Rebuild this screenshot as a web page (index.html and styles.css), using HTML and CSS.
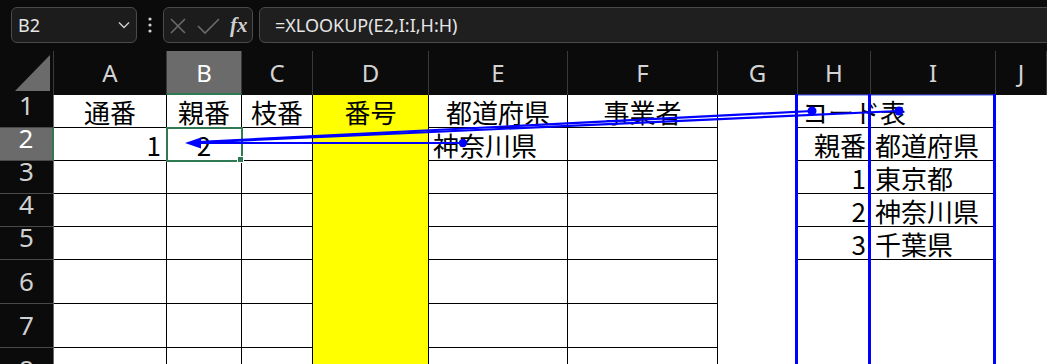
FILE: index.html
```html
<!DOCTYPE html>
<html lang="ja">
<head>
  <meta charset="UTF-8" />
  <title>XLOOKUP - コード表</title>
  <link rel="stylesheet" href="styles.css">
</head>
<body>
  <div class="topbar">
    <div class="namebox">
      <span>B2</span>
      <svg width="12" height="8" viewBox="0 0 12 8"><polyline points="1,1.5 6,6.5 11,1.5" fill="none" stroke="#cfcfcf" stroke-width="1.4"/></svg>
    </div>
    <div class="dots">
      <svg width="4" height="16" viewBox="0 0 4 16"><circle cx="2" cy="2" r="1.6" fill="#cfcfcf"/><circle cx="2" cy="8" r="1.6" fill="#cfcfcf"/><circle cx="2" cy="14" r="1.6" fill="#cfcfcf"/></svg>
    </div>
    <div class="fxbox">
      <svg width="56" height="34" viewBox="0 0 56 34">
        <path d="M2 11 L16 25 M16 11 L2 25" stroke="#6a6a6a" stroke-width="1.6" fill="none"/>
        <polyline points="29,18 36,25 50,11" stroke="#6a6a6a" stroke-width="1.6" fill="none"/>
      </svg>
      <span class="fx">fx</span>
    </div>
    <div class="formula">=XLOOKUP(E2,I:I,H:H)</div>
  </div>

  <div class="sheet">
    <!-- 列見出し -->
    <div class="corner"><svg width="54" height="44"><polygon points="15,40 50,4 50,40" fill="#6b6b6b"/></svg></div>
    <div class="ch">A</div>
    <div class="ch on">B</div>
    <div class="ch">C</div>
    <div class="ch">D</div>
    <div class="ch">E</div>
    <div class="ch">F</div>
    <div class="ch">G</div>
    <div class="ch">H</div>
    <div class="ch">I</div>
    <div class="ch">J</div>

    <!-- 1 -->
    <div class="rn">1</div>
    <div class="cell g ctr">通番</div>
    <div class="cell g ctr">親番</div>
    <div class="cell g ctr">枝番</div>
    <div class="cell yel ctr">番号</div>
    <div class="cell g ctr">都道府県</div>
    <div class="cell g ctr">事業者</div>
    <div class="cell"></div>
    <div class="cell gb">コード表</div>
    <div class="cell gb"></div>
    <div class="cell"></div>

    <!-- 2 -->
    <div class="rn on">2</div>
    <div class="cell g rt">1</div>
    <div class="cell g ctr sel">2</div>
    <div class="cell g"></div>
    <div class="cell yel"></div>
    <div class="cell g">神奈川県</div>
    <div class="cell g"></div>
    <div class="cell"></div>
    <div class="cell gb rt">親番</div>
    <div class="cell gb">都道府県</div>
    <div class="cell"></div>

    <!-- 3 -->
    <div class="rn">3</div>
    <div class="cell g"></div>
    <div class="cell g"></div>
    <div class="cell g"></div>
    <div class="cell yel"></div>
    <div class="cell g"></div>
    <div class="cell g"></div>
    <div class="cell"></div>
    <div class="cell gb rt">1</div>
    <div class="cell gb">東京都</div>
    <div class="cell"></div>

    <!-- 4 -->
    <div class="rn">4</div>
    <div class="cell g"></div>
    <div class="cell g"></div>
    <div class="cell g"></div>
    <div class="cell yel"></div>
    <div class="cell g"></div>
    <div class="cell g"></div>
    <div class="cell"></div>
    <div class="cell gb rt">2</div>
    <div class="cell gb">神奈川県</div>
    <div class="cell"></div>

    <!-- 5 -->
    <div class="rn">5</div>
    <div class="cell g"></div>
    <div class="cell g"></div>
    <div class="cell g"></div>
    <div class="cell yel"></div>
    <div class="cell g"></div>
    <div class="cell g"></div>
    <div class="cell"></div>
    <div class="cell gb rt">3</div>
    <div class="cell gb">千葉県</div>
    <div class="cell"></div>

    <!-- 6 -->
    <div class="rn">6</div>
    <div class="cell g"></div>
    <div class="cell g"></div>
    <div class="cell g"></div>
    <div class="cell yel"></div>
    <div class="cell g"></div>
    <div class="cell g"></div>
    <div class="cell"></div>
    <div class="cell"></div>
    <div class="cell"></div>
    <div class="cell"></div>

    <!-- 7 -->
    <div class="rn">7</div>
    <div class="cell g"></div>
    <div class="cell g"></div>
    <div class="cell g"></div>
    <div class="cell yel"></div>
    <div class="cell g"></div>
    <div class="cell g"></div>
    <div class="cell"></div>
    <div class="cell"></div>
    <div class="cell"></div>
    <div class="cell"></div>

    <!-- 8 -->
    <div class="rn">8</div>
    <div class="cell g"></div>
    <div class="cell g"></div>
    <div class="cell g"></div>
    <div class="cell yel"></div>
    <div class="cell g"></div>
    <div class="cell g"></div>
    <div class="cell"></div>
    <div class="cell"></div>
    <div class="cell"></div>
    <div class="cell"></div>
  </div>

  <!-- 参照範囲の枠とトレース矢印 -->
  <svg class="tracers" width="1047" height="364" viewBox="0 0 1047 364">
    <line x1="796" y1="95" x2="995" y2="95" stroke="#4455ff" stroke-width="1"/>
    <line x1="796.5" y1="94" x2="796.5" y2="364" stroke="#0000ff" stroke-width="3"/>
    <line x1="869.5" y1="94" x2="869.5" y2="364" stroke="#0000ff" stroke-width="3"/>
    <line x1="994.5" y1="94" x2="994.5" y2="364" stroke="#0000ff" stroke-width="3"/>

    <line x1="463" y1="143" x2="198" y2="143" stroke="#0000ff" stroke-width="2"/>
    <line x1="899" y1="111" x2="198" y2="142.5" stroke="#0000ff" stroke-width="2.2"/>
    <line x1="812" y1="111" x2="198" y2="142" stroke="#0000ff" stroke-width="2.2"/>
    <polygon points="185,143 201,137.5 201,148.5" fill="#0000ff"/>
    <circle cx="463" cy="143" r="4.2" fill="#0000ff"/>
    <circle cx="812" cy="111" r="4.5" fill="#0000ff"/>
    <circle cx="899" cy="111" r="4.5" fill="#0000ff"/>
  </svg>
</body>
</html>
```

FILE: styles.css
```css
body {
  margin: 0;
  width: 1047px;
  height: 364px;
  overflow: hidden;
  position: relative;
  background: #0b0b0b;
  font-family: "Noto Sans", sans-serif;
}

/* 数式バー */
.topbar {
  display: flex;
  align-items: flex-start;
  height: 51px;
  padding: 7px 0 0 11px;
  box-sizing: border-box;
}

.namebox, .fxbox, .formula {
  height: 36px;
  box-sizing: border-box;
  border: 1px solid #4a4a4a;
  border-radius: 6px;
  background: #1c1c1c;
  display: flex;
  align-items: center;
}

.namebox {
  width: 126px;
  justify-content: space-between;
  padding: 0 6px 0 6px;
  color: #e6e6e6;
  font-size: 18px;
}

.dots {
  width: 26px;
  height: 36px;
  display: flex;
  align-items: center;
  justify-content: center;
}

.fxbox {
  width: 90px;
  padding-left: 5px;
}

.fx {
  margin-left: 5px;
  font-family: "Liberation Serif", serif;
  font-style: italic;
  font-weight: bold;
  font-size: 21px;
  color: #cfcfcf;
}

.formula {
  flex: 1;
  margin-left: 6px;
  margin-right: -20px;
  padding-left: 15px;
  background: #1f1f1f;
  color: #e6e6e6;
  font-size: 18px;
}

/* シート */
.sheet {
  display: grid;
  grid-template-columns: 54px 113px 75px 71px 116px 139px 150px 80px 73px 125px 51px;
  grid-template-rows: 44px 33px 33px 33px 33px 33px 44px 44px 44px;
  background: #fff;
}

.corner {
  background: #0b0b0b;
  border-right: 1px solid #3a3a3a;
  box-sizing: border-box;
}

.corner svg {
  display: block;
}

.ch {
  background: #0b0b0b;
  color: #d4d4d4;
  font-size: 24px;
  line-height: 44px;
  text-align: center;
  border-right: 1px solid #3a3a3a;
  box-sizing: border-box;
}

.ch.on {
  background: #6b6b6b;
  color: #fff;
  box-shadow: inset 0 -2px #2f7a52;
}

.rn {
  background: #0b0b0b;
  color: #d0d0d0;
  font-size: 26px;
  line-height: 26px;
  display: flex;
  align-items: flex-end;
  justify-content: center;
  padding-bottom: 9px;
  box-sizing: border-box;
  border-bottom: 1px solid #4a4a4a;
  border-right: 1px solid #6a6a6a;
}

.rn.on {
  background: #6b6b6b;
  color: #fff;
  border-right: 2px solid #2f7a52;
}

.cell {
  box-sizing: border-box;
  font-family: "Noto Sans CJK JP", sans-serif;
  font-size: 26px;
  line-height: 33px;
  color: #000;
  white-space: nowrap;
  padding: 0 4px;
}

.g {
  border-right: 1px solid #000;
  border-bottom: 1px solid #000;
}

.gb {
  border-bottom: 1px solid #000;
}

.yel {
  background: #ffff00;
  border-right: 1px solid #000;
}

.ctr {
  text-align: center;
}

.rt {
  text-align: right;
  padding-right: 5px;
}

.sel {
  position: relative;
  outline: 2px solid #2f7a52;
  outline-offset: -1px;
}

.sel::after {
  content: "";
  position: absolute;
  right: -3px;
  bottom: -3px;
  width: 5px;
  height: 5px;
  background: #2f7a52;
  border: 1px solid #fff;
}

.tracers {
  position: absolute;
  left: 0;
  top: 0;
  pointer-events: none;
}
```
